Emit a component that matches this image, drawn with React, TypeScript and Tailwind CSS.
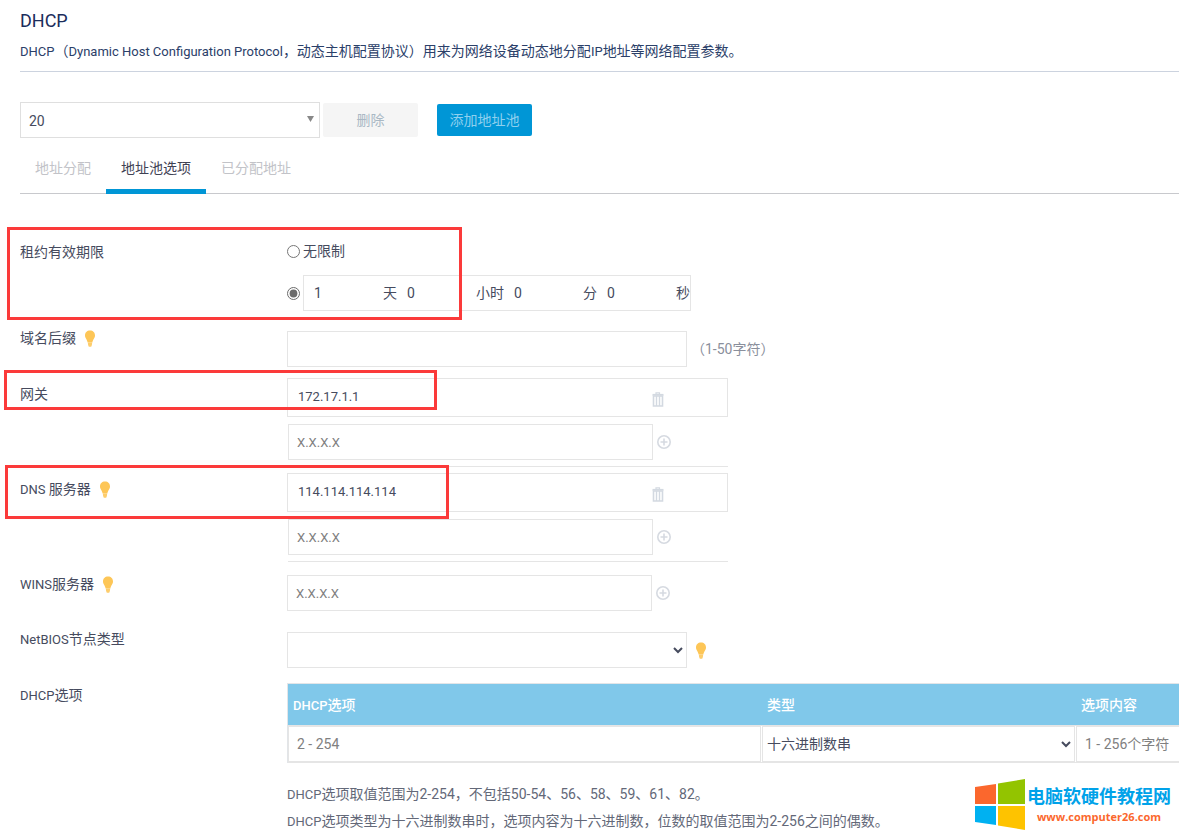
import React, { useState } from "react";

interface ServerFieldProps {
  name: string;
  address: string;
}

const tabs = ["地址分配", "地址池选项", "已分配地址"];

const leaseUnits = [
  { unit: "天", value: "1" },
  { unit: "小时", value: "0" },
  { unit: "分", value: "0" },
  { unit: "秒", value: "0" },
];

// Latin words sit one size below the Chinese text around them
const Latin: React.FC<{ children: React.ReactNode }> = ({ children }) => (
  <span className="text-[13px] leading-none">{children}</span>
);

const BulbIcon: React.FC = () => (
  <svg width="12" height="17" viewBox="0 0 12 17" className="shrink-0">
    <path
      d="M6 .5C3 .5 1 2.600 1 5.400c0 2.600 2 3.600 2.700 7.100h4.600c.7-3.500 2.700-4.500 2.700-7.100C11 2.600 9 .5 6 .5z"
      fill="#fdc657"
    />
    <path d="M3.800 12.500h4.400L7.900 15 7.200 16.700H4.800L4.100 15z" fill="#fdcd6c" />
  </svg>
);

const TrashIcon: React.FC = () => (
  <svg width="12" height="15" viewBox="0 0 12 15" fill="none" stroke="#d3d9e1">
    <path d="M.5 2.800h11" strokeWidth="1.800" />
    <path d="M4 2V.8h3.500V2" strokeWidth="1.200" />
    <path d="M1.500 4v10h9V4z" strokeWidth="1.600" />
    <path d="M4.500 4v10M7.500 4v10" strokeWidth="1.400" />
  </svg>
);

const PlusIcon: React.FC = () => (
  <svg width="14" height="14" viewBox="0 0 14 14" fill="none" stroke="#d6dae1">
    <circle cx="7" cy="7" r="6.200" strokeWidth="1.600" />
    <path d="M3.500 7h7M7 3.500v7" strokeWidth="1.600" />
  </svg>
);

const AddressInput: React.FC<{ label: string }> = ({ label }) => (
  <div className="flex items-center gap-1">
    <input
      aria-label={label}
      placeholder="X.X.X.X"
      className="h-9 w-[365px] border border-[#e5e5e5] px-2 text-[13px] placeholder:text-[#808080]"
    />
    <button type="button" aria-label="添加">
      <PlusIcon />
    </button>
  </div>
);

// Saved address on top, empty input for the next one below
const ServerField: React.FC<ServerFieldProps> = ({ name, address }) => (
  <div className="w-[441px]">
    <div className="flex h-[39px] items-center border border-[#e5e5e5] pl-2.5">
      <span className="w-[354px] text-[13px]">{address}</span>
      <button type="button" aria-label="删除" className="pt-1">
        <TrashIcon />
      </button>
    </div>
    <div className="ml-px border-b border-[#e5e5e5] pb-1.5 pt-[7px]">
      <AddressInput label={name} />
    </div>
  </div>
);

const Row: React.FC<{
  latin?: string;
  label: string;
  tip?: boolean;
  className?: string;
  labelClass?: string;
  htmlFor?: string;
  children: React.ReactNode;
}> = ({ latin, label, tip, className = "", labelClass = "", htmlFor, children }) => (
  <div className={`relative flex ${className}`}>
    <div className={`flex h-6 w-[267px] shrink-0 items-center gap-2 ${labelClass}`}>
      <label htmlFor={htmlFor}>
        {latin && <Latin>{latin}</Latin>}
        {label}
      </label>
      {tip && <BulbIcon />}
    </div>
    <div className="min-w-0 flex-1">{children}</div>
  </div>
);

const Watermark: React.FC = () => (
  <div className="absolute bottom-1.5 right-2 flex items-center gap-0.5">
    <svg width="50" height="51" viewBox="0 0 50 51">
      <path d="M0 8l21-3v20H0z" fill="#fb672d" />
      <path d="M23 4.500L50 0v25H23z" fill="#93c400" />
      <path d="M0 27h21v19L0 43z" fill="#00b1f1" />
      <path d="M23 27h27v24l-27-4.500z" fill="#fec300" />
    </svg>
    <div className="text-center font-bold">
      <p className="text-[18px] leading-6 text-[#00a2e9]">电脑软硬件教程网</p>
      <p className="font-['Open_Sans',sans-serif] text-[11px] leading-4 text-[#fb672d]">
        www.computer26.com
      </p>
    </div>
  </div>
);

const App: React.FC = () => {
  const [activeTab, setActiveTab] = useState("地址池选项");
  const [limited, setLimited] = useState(true);

  return (
    <div className="relative min-h-screen overflow-hidden bg-white pl-5 font-[Roboto,'Noto_Sans_CJK_SC',sans-serif] text-sm text-[#464b5e]">
      <header className="border-b border-[#ccd3df] pb-2 pt-[7px] text-[#2b4069]">
        <h1 className="text-[18px] leading-7 text-[#1b2d5c]">DHCP</h1>
        <p className="pt-1 leading-6">
          <Latin>DHCP</Latin>（<Latin>Dynamic Host Configuration Protocol</Latin>
          ，动态主机配置协议）用来为网络设备动态地分配<Latin>IP</Latin>地址等网络配置参数。
        </p>
      </header>

      <div className="mt-[30px] flex items-center">
        <div className="relative w-[300px]">
          <select
            aria-label="地址池"
            className="h-9 w-full appearance-none border border-[#dfdfdf] px-2 pt-0.5"
          >
            <option>20</option>
          </select>
          <svg
            width="7"
            height="6"
            viewBox="0 0 7 6"
            className="pointer-events-none absolute right-1.5 top-3.5"
          >
            <path d="M0 0h7L3.500 6z" fill="#888888" />
          </svg>
        </div>
        <button className="ml-[3px] h-[34px] w-[95px] rounded-xs bg-[#f5f5f5] text-[#a9b8c4]">
          删除
        </button>
        <button className="ml-[19px] h-8 w-[95px] rounded-xs bg-[#0096d6] text-[#8fd0ee]">
          添加地址池
        </button>
      </div>

      <nav className="mt-2 flex h-12 border-b border-[#c8c9cd]">
        {tabs.map((tab) => (
          <button
            key={tab}
            onClick={() => setActiveTab(tab)}
            className={`-mb-px border-b-[5px] px-[15px] ${
              activeTab === tab
                ? "border-[#0096d6] text-[#3f4254]"
                : "border-transparent text-[#c2c3c8]"
            }`}
          >
            {tab}
          </button>
        ))}
      </nav>

      <form className="pt-[46px]">
        <Row label="租约有效期限">
          <div className="flex h-[22px] items-center gap-[3px]">
            <input
              type="radio"
              id="unlimited"
              name="lease"
              checked={!limited}
              onChange={() => setLimited(false)}
              className="size-[13px]"
            />
            <label htmlFor="unlimited">无限制</label>
          </div>
          <div className="mt-[13px] flex items-center gap-[3px]">
            <input
              type="radio"
              aria-label="租约时长"
              name="lease"
              checked={limited}
              onChange={() => setLimited(true)}
              className="size-[13px] accent-[#6b6b6b]"
            />
            <div className="flex h-9 w-[388px] items-center border border-[#e5e5e5]">
              {leaseUnits.map(({ unit, value }) => (
                <React.Fragment key={unit}>
                  <input
                    aria-label={unit}
                    defaultValue={value}
                    className="w-0 flex-1 pl-2.5"
                  />
                  <span>{unit}</span>
                </React.Fragment>
              ))}
            </div>
          </div>
          <div className="pointer-events-none absolute -left-[13px] -top-[13px] h-[93px] w-[455px] border-3 border-[#fb3a3a]" />
        </Row>

        <Row label="域名后缀" tip htmlFor="suffix" className="mt-[15px]">
          <div className="flex items-center gap-1 pt-[5px]">
            <input id="suffix" className="h-9 w-[400px] border border-[#e5e5e5] px-2" />
            <span className="text-[#8a8f9c]">（1-50字符）</span>
          </div>
        </Row>

        <Row label="网关" className="mt-[11px]" labelClass="mt-1">
          <ServerField name="网关" address="172.17.1.1" />
          <div className="pointer-events-none absolute -left-4 -top-2 h-10 w-[433px] border-3 border-[#fb3a3a]" />
        </Row>

        <Row latin="DNS " label="服务器" tip className="mt-1.5" labelClass="mt-1">
          <ServerField name="DNS 服务器" address="114.114.114.114" />
          <div className="pointer-events-none absolute -left-[15px] -top-2 h-[54px] w-[444px] border-3 border-[#fb3a3a]" />
        </Row>

        <Row latin="WINS" label="服务器" tip className="mt-2.5">
          <div className="pt-[3px]">
            <AddressInput label="WINS服务器" />
          </div>
        </Row>

        <Row latin="NetBIOS" label="节点类型" htmlFor="netbios" className="mt-4">
          <div className="flex items-center gap-2 pt-[5px]">
            <select id="netbios" className="h-9 w-[400px] border border-[#e5e5e5]" />
            <BulbIcon />
          </div>
        </Row>

        <Row latin="DHCP" label="选项" className="mt-[15px]">
          <table className="w-full table-fixed border-separate border-spacing-0 border-l border-t border-[#e2e5e8]">
            <thead>
              <tr className="h-[42px] bg-[#80c8ea] text-left text-white">
                <th className="w-[474px] border-b border-[#e5e5e5] px-[5px] font-medium">
                  <Latin>DHCP</Latin>选项
                </th>
                <th className="w-[314px] border-b border-[#e5e5e5] px-[5px] font-medium">
                  类型
                </th>
                <th className="border-b border-[#e5e5e5] px-[5px] font-medium">选项内容</th>
              </tr>
            </thead>
            <tbody>
              <tr>
                <td className="border-b border-[#e5e5e5] p-0 pr-px">
                  <input
                    aria-label="DHCP选项"
                    placeholder="2 - 254"
                    className="block h-9 w-full border border-[#e5e5e5] px-2 placeholder:text-[#808080]"
                  />
                </td>
                <td className="border-b border-[#e5e5e5] p-0 pr-px">
                  <select
                    aria-label="类型"
                    className="block h-9 w-full border border-[#e5e5e5]"
                  >
                    <option>十六进制数串</option>
                  </select>
                </td>
                <td className="border-b border-[#e5e5e5] p-0">
                  <input
                    aria-label="选项内容"
                    placeholder="1 - 256个字符"
                    className="block h-9 w-full border border-r-0 border-[#e5e5e5] pl-2 placeholder:text-[#808080]"
                  />
                </td>
              </tr>
            </tbody>
          </table>
          <div className="mt-[18px] leading-[27px] text-[#636878]">
            <p>
              <Latin>DHCP</Latin>选项取值范围为2-254，不包括50-54、56、58、59、61、82。
            </p>
            <p>
              <Latin>DHCP</Latin>
              选项类型为十六进制数串时，选项内容为十六进制数，位数的取值范围为2-256之间的偶数。
            </p>
          </div>
        </Row>
      </form>

      <Watermark />
    </div>
  );
};

export default App;
